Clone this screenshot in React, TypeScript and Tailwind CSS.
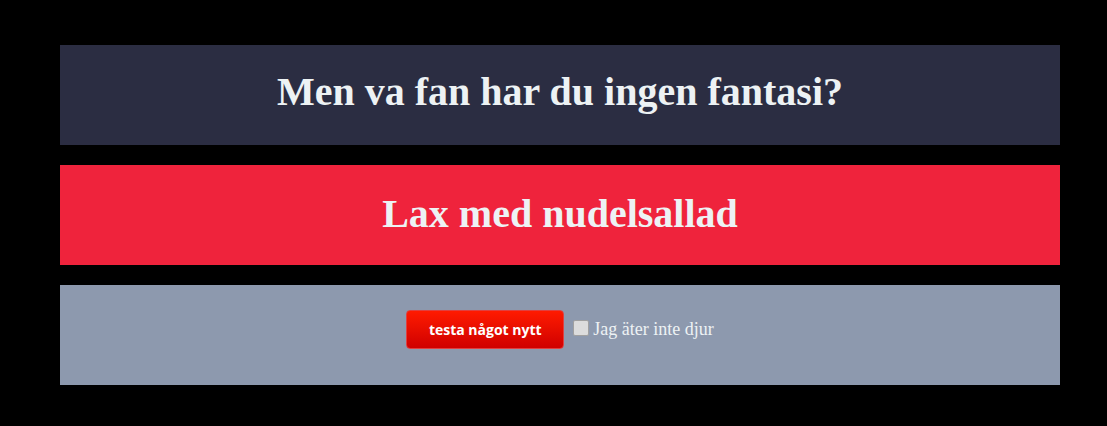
import React from "react";

export default function App() {
  return (
    <div className="min-h-[426px] w-full bg-black pl-[60px] pt-[45px] pb-[41px] flex flex-col gap-[20px]" style={{ fontFamily: '"Liberation Serif", serif' }}>
      <div className="w-[1000px] h-[100px] bg-[#2b2d42] flex items-center justify-center">
        <h1 className="text-[40px] font-bold text-[#edf2f4] leading-none -mt-[7px]">Men va fan har du ingen fantasi?</h1>
      </div>
      <div className="w-[1000px] h-[100px] bg-[#ef233c] flex items-center justify-center">
        <h2 className="text-[40px] font-bold text-[#edf2f4] leading-none -mt-[2px]">Lax med nudelsallad</h2>
      </div>
      <div className="w-[1000px] h-[100px] bg-[#8d99ae] flex items-start justify-center pt-[25px]">
        <div className="flex items-center">
          <button className="w-[158px] h-[39px] rounded-[4px] border border-[#e04040] bg-gradient-to-b from-[#ff1a00] to-[#d00000] text-white text-[14px] font-bold" style={{ fontFamily: '"Open Sans", sans-serif' }}>
            testa något nytt
          </button>
          <label className="ml-[9px] flex items-center text-[18px] text-[#edf2f4]">
            <span className="w-[16px] h-[16px] bg-[#dcdcdc] border border-[#a0a0a0] rounded-[2px] mr-[4px] -mt-[3px]" />
            Jag äter inte djur
          </label>
        </div>
      </div>
    </div>
  );
}
